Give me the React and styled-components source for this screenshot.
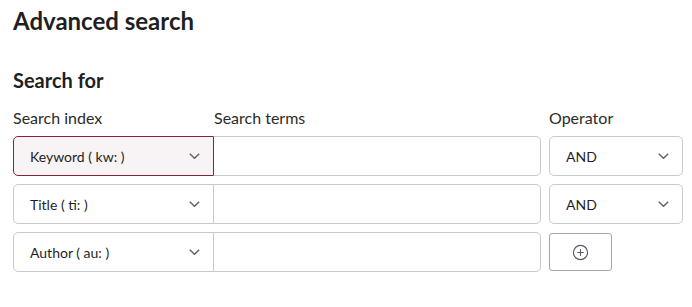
import React from "react";
import styled, { createGlobalStyle } from "styled-components";
import { CirclePlus } from "lucide-react";

const GlobalStyle = createGlobalStyle`
  body {
    margin: 0;
    background: #ffffff;
    font-family: Lato, "Noto Sans", sans-serif;
    color: #222222;
  }
`;

const Page = styled.div`
  width: 670px;
  padding: 0 13px;
`;

const Title = styled.h1`
  margin: 0;
  padding-top: 6px;
  font-size: 24px;
  line-height: 30px;
  font-weight: 700;
  color: #1f1f1f;
`;

const SectionTitle = styled.h2`
  margin: 32px 0 0;
  font-size: 20px;
  line-height: 24px;
  font-weight: 700;
  color: #1f1f1f;
`;

const Grid = styled.div`
  display: grid;
  grid-template-columns: 201px 327px 142px;
  row-gap: 8px;
  margin-top: 16px;
  & > *:nth-child(3n) {
    margin-left: 8px;
  }
`;

const Label = styled.div`
  font-size: 16px;
  line-height: 20px;
  color: #2b2b2b;
`;

const SelectBox = styled.div`
  height: 40px;
  box-sizing: border-box;
  display: flex;
  align-items: center;
  justify-content: space-between;
  padding: 0 13px 0 16px;
  border: 1px solid ${(p) => (p.$active ? "#8b2335" : "#c9c9c9")};
  background: ${(p) => (p.$active ? "#f8f3f4" : "#ffffff")};
  border-radius: ${(p) => (p.$joined ? "5px 0 0 5px" : "5px")};
  font-size: 14px;
  color: #1f1f1f;
`;

const TermInput = styled.div`
  height: 40px;
  box-sizing: border-box;
  border: 1px solid #c9c9c9;
  border-left: none;
  border-radius: 0 5px 5px 0;
`;

const AddButton = styled.button`
  width: 63px;
  height: 38px;
  margin-top: 1px;
  box-sizing: border-box;
  border: 1px solid #a3a7b0;
  border-radius: 3px;
  background: #ffffff;
  display: flex;
  align-items: center;
  justify-content: center;
  padding: 0;
  color: #555a64;
`;

const Chevron = () => (
  <svg width="11" height="6" viewBox="0 0 11 6" fill="none">
    <path d="M0.8 0.8l4.7 4.5 4.7-4.5" stroke="#666" strokeWidth="1.5" />
  </svg>
);

const rows = [
  { index: "Keyword ( kw: )", op: "AND", active: true },
  { index: "Title ( ti: )", op: "AND" },
  { index: "Author ( au: )" },
];

export default function App() {
  return (
    <Page>
      <GlobalStyle />
      <Title>Advanced search</Title>
      <SectionTitle>Search for</SectionTitle>
      <Grid>
        <Label>Search index</Label>
        <Label>Search terms</Label>
        <Label>Operator</Label>
        {rows.map((r, i) => (
          <React.Fragment key={i}>
            <SelectBox $joined $active={r.active}>
              <span>{r.index}</span>
              <Chevron />
            </SelectBox>
            <TermInput />
            {r.op ? (
              <SelectBox>
                <span>{r.op}</span>
                <Chevron />
              </SelectBox>
            ) : (
              <div>
                <AddButton>
                  <CirclePlus size={17} strokeWidth={1.6} />
                </AddButton>
              </div>
            )}
          </React.Fragment>
        ))}
      </Grid>
    </Page>
  );
}
